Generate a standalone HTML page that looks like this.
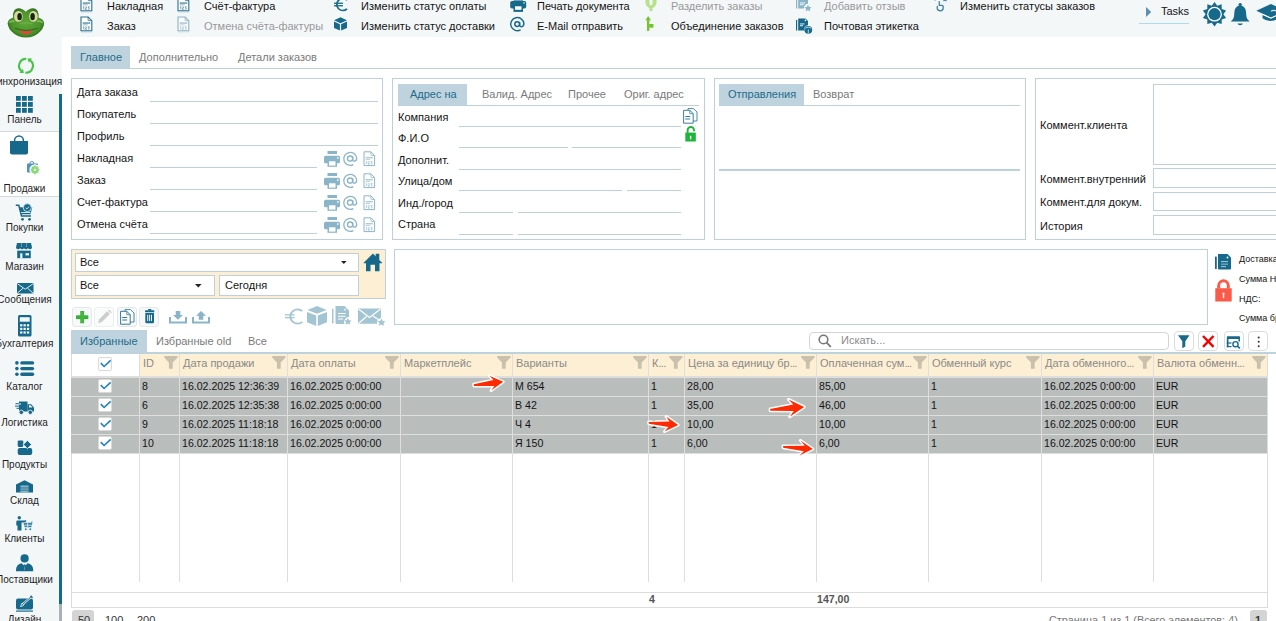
<!DOCTYPE html>
<html><head><meta charset="utf-8">
<style>
*{box-sizing:border-box;margin:0;padding:0}
html,body{width:1276px;height:621px;overflow:hidden;background:#f3f7f8;font-family:"Liberation Sans",sans-serif;font-size:11px;color:#141414}
.a{position:absolute;white-space:nowrap}
.t{position:absolute;white-space:nowrap;line-height:13px}
svg{position:absolute;display:block;overflow:visible}
#content{position:absolute;left:62px;top:37px;width:1214px;height:584px;background:#fff}
.sb{position:absolute;left:-26px;width:101px;text-align:center;font-size:10px;line-height:12px;color:#1e1e1e}
.box{position:absolute;border:1px solid #bcd1dc;background:#fff}
.ul{position:absolute;height:1px;background:#bcd1dc}
.tabsel{position:absolute;background:#bed3de;color:#226b8a}
.tabun{color:#7a7a7a}
.gt{color:#8b8b8b}
.hd{position:absolute;top:354px;height:22px;background:#fdefd3}
.cs{position:absolute;width:1px;background:#dedede}
.row{position:absolute;left:71px;width:1196px;height:18px;background:#b9bdbc}
.rs{position:absolute;left:71px;width:1196px;height:1px;background:#dedede}
.ic{fill:#1a6b8c}
</style></head><body>

<!-- TOP BAR TEXT -->
<div class="t" style="left:107px;top:0px">Накладная</div>
<div class="t" style="left:107px;top:20px">Заказ</div>
<div class="t" style="left:204px;top:0px">Счёт-фактура</div>
<div class="t gt" style="left:204px;top:20px;color:#999">Отмена счёта-фактуры</div>
<div class="t" style="left:361px;top:0px">Изменить статус оплаты</div>
<div class="t" style="left:361px;top:20px">Изменить статус доставки</div>
<div class="t" style="left:537px;top:0px">Печать документа</div>
<div class="t" style="left:537px;top:20px">E-Mail отправить</div>
<div class="t" style="left:671px;top:0px;color:#999">Разделить заказы</div>
<div class="t" style="left:671px;top:20px">Объединение заказов</div>
<div class="t" style="left:824px;top:0px;color:#999">Добавить отзыв</div>
<div class="t" style="left:824px;top:20px">Почтовая этикетка</div>
<div class="t" style="left:960px;top:0px">Изменить статусы заказов</div>
<div class="t" style="left:1161px;top:5px">Tasks</div>
<div class="a" style="left:1139px;top:23px;width:50px;height:1px;background:#a9dcf3"></div>

<!-- TOP ICONS -->
<svg style="left:79.5px;top:-4.5px;opacity:1" width="13" height="17" viewBox="0 0 13 17"><path d="M1 1 H8.1 L11.8 4.7 V14.8 H1 Z" fill="#fff" stroke="#2a7090" stroke-width="1.1"/><path d="M8.1 1 V3.8 Q8.1 4.7 9 4.7 H11.8" fill="none" stroke="#2a7090" stroke-width="0.8"/><rect x="2.7" y="6.5" width="7.6" height="1.1" fill="#2a7090"/><rect x="2.7" y="8.4" width="5" height="0.9" fill="#2a7090" opacity="0.55"/><path d="M3 11.3 L3.8 10.7 V13.3 M5.1 11.1 Q5.8 10.5 6.5 11 Q6.8 11.5 5.1 13.3 H6.8 M7.8 10.8 H9.3 L8.5 11.8 Q9.5 12 9.3 12.8 Q8.8 13.5 7.8 13.1" fill="none" stroke="#2a7090" stroke-width="0.75" opacity="0.85"/><rect x="1" y="15.5" width="11" height="0.9" fill="#2a7090" opacity="0.25"/></svg>
<svg style="left:79.5px;top:15.5px;opacity:1" width="13" height="17" viewBox="0 0 13 17"><path d="M1 1 H8.1 L11.8 4.7 V14.8 H1 Z" fill="#fff" stroke="#2a7090" stroke-width="1.1"/><path d="M8.1 1 V3.8 Q8.1 4.7 9 4.7 H11.8" fill="none" stroke="#2a7090" stroke-width="0.8"/><rect x="2.7" y="6.5" width="7.6" height="1.1" fill="#2a7090"/><rect x="2.7" y="8.4" width="5" height="0.9" fill="#2a7090" opacity="0.55"/><path d="M3 11.3 L3.8 10.7 V13.3 M5.1 11.1 Q5.8 10.5 6.5 11 Q6.8 11.5 5.1 13.3 H6.8 M7.8 10.8 H9.3 L8.5 11.8 Q9.5 12 9.3 12.8 Q8.8 13.5 7.8 13.1" fill="none" stroke="#2a7090" stroke-width="0.75" opacity="0.85"/><rect x="1" y="15.5" width="11" height="0.9" fill="#2a7090" opacity="0.25"/></svg>
<svg style="left:176.5px;top:-4.5px;opacity:1" width="13" height="17" viewBox="0 0 13 17"><path d="M1 1 H8.1 L11.8 4.7 V14.8 H1 Z" fill="#fff" stroke="#2a7090" stroke-width="1.1"/><path d="M8.1 1 V3.8 Q8.1 4.7 9 4.7 H11.8" fill="none" stroke="#2a7090" stroke-width="0.8"/><rect x="2.7" y="6.5" width="7.6" height="1.1" fill="#2a7090"/><rect x="2.7" y="8.4" width="5" height="0.9" fill="#2a7090" opacity="0.55"/><path d="M3 11.3 L3.8 10.7 V13.3 M5.1 11.1 Q5.8 10.5 6.5 11 Q6.8 11.5 5.1 13.3 H6.8 M7.8 10.8 H9.3 L8.5 11.8 Q9.5 12 9.3 12.8 Q8.8 13.5 7.8 13.1" fill="none" stroke="#2a7090" stroke-width="0.75" opacity="0.85"/><rect x="1" y="15.5" width="11" height="0.9" fill="#2a7090" opacity="0.25"/></svg>
<svg style="left:176.5px;top:15.5px;opacity:0.5" width="13" height="17" viewBox="0 0 13 17"><path d="M1 1 H8.1 L11.8 4.7 V14.8 H1 Z" fill="#fff" stroke="#2a7090" stroke-width="1.1"/><path d="M8.1 1 V3.8 Q8.1 4.7 9 4.7 H11.8" fill="none" stroke="#2a7090" stroke-width="0.8"/><rect x="2.7" y="6.5" width="7.6" height="1.1" fill="#2a7090"/><rect x="2.7" y="8.4" width="5" height="0.9" fill="#2a7090" opacity="0.55"/><path d="M3 11.3 L3.8 10.7 V13.3 M5.1 11.1 Q5.8 10.5 6.5 11 Q6.8 11.5 5.1 13.3 H6.8 M7.8 10.8 H9.3 L8.5 11.8 Q9.5 12 9.3 12.8 Q8.8 13.5 7.8 13.1" fill="none" stroke="#2a7090" stroke-width="0.75" opacity="0.85"/><rect x="1" y="15.5" width="11" height="0.9" fill="#2a7090" opacity="0.25"/></svg>
<svg style="left:333px;top:-4px" width="16" height="16" viewBox="0 0 16 16"><path d="M14 4.2 A6 6 0 1 0 14 12.8" fill="none" stroke="#17698b" stroke-width="1.7"/><rect x="1" y="6.6" width="9" height="1.3" fill="#17698b"/><rect x="1" y="9.1" width="9" height="1.3" fill="#17698b"/></svg>
<svg style="left:334px;top:16.5px" width="14" height="14" viewBox="0 0 14 14"><path d="M6.5 0.3 L12.9 3.3 L6.5 6.3 L0.1 3.3 Z" fill="#17698b"/><path d="M0 4.5 L5.9 7.2 V13.6 L0 10.9 Z" fill="#17698b"/><path d="M13 4.5 L7.1 7.2 V13.6 L13 10.9 Z" fill="#17698b"/></svg>
<svg style="left:510px;top:-1px" width="17" height="14" viewBox="0 0 17 14"><rect x="3.5" y="0" width="9.5" height="3" fill="#17698b" opacity="0.6"/><rect x="0.2" y="2" width="16" height="7.5" rx="1.8" fill="#17698b"/><rect x="3.5" y="6" width="9.5" height="6.9" fill="#17698b"/><rect x="5" y="7.3" width="6.5" height="3.5" fill="#fff"/><rect x="13.3" y="3.3" width="1.5" height="1.3" fill="#fff" opacity="0.8"/></svg>
<svg style="left:509.5px;top:16.5px" width="15" height="15" viewBox="0 0 15 15"><circle cx="7.2" cy="7.1" r="2.4" fill="none" stroke="#17698b" stroke-width="1.5"/><path d="M9.6 5 V8.2 Q9.8 9.9 11.5 9.9 Q13.9 9.5 13.9 6.6 A6.6 6.6 0 1 0 10.6 12.9" fill="none" stroke="#17698b" stroke-width="1.4"/></svg>
<svg style="left:644.5px;top:-1px" width="12" height="13" viewBox="0 0 12 13"><path fill-rule="evenodd" d="M0.4 0 V3 Q0.4 7 4.5 9.3 V12 H7.5 V9.3 Q11.6 7 11.6 3 V0 Z M4.4 0 V4 Q4.4 6.2 6 6.2 Q7.6 6.2 7.6 4 V0 Z" fill="#b7e28c"/></svg>
<svg style="left:645px;top:16px" width="10" height="16" viewBox="0 0 10 16"><rect x="2" y="2" width="2.3" height="12.9" fill="#72c427"/><path d="M0.4 4.2 L3.15 0 L5.9 4.2 Z" fill="#72c427"/><rect x="4.2" y="8" width="4.2" height="3.7" fill="#72c427"/></svg>
<svg style="left:796px;top:-3px" width="17" height="16" viewBox="0 0 17 16"><rect x="0" y="0" width="1.2" height="11.5" fill="#8ab4c8"/><path d="M2.2 0 H9.5 L12 2.5 V6.8 A4 4 0 0 0 8 11.5 H2.2 Z" fill="#8ab4c8"/><rect x="4" y="5.5" width="5" height="0.9" fill="#fff"/><rect x="4" y="7.3" width="3.5" height="0.9" fill="#fff"/><path d="M12 7.8 L13.1 10.1 L15.6 10.3 L13.7 11.9 L14.3 14.5 L12 13.1 L9.7 14.5 L10.3 11.9 L8.4 10.3 L10.9 10.1 Z" fill="#8ab4c8"/></svg>
<svg style="left:796px;top:17.5px" width="17" height="16" viewBox="0 0 17 16"><rect x="0" y="2" width="1.2" height="10.5" fill="#17698b"/><path d="M2.2 0.5 H9.5 L12 3 V7.2 A4.2 4.2 0 0 0 8.3 12.6 H2.2 Z" fill="#17698b"/><circle cx="9.4" cy="2.4" r="0.8" fill="#fff"/><rect x="4" y="5.5" width="4.5" height="0.9" fill="#fff"/><rect x="4" y="7.3" width="3" height="0.9" fill="#fff"/><circle cx="12.3" cy="11.8" r="3.9" fill="#17698b"/><path d="M9.4 10.2 L12.3 9 L15.2 10.2 M12.3 11.3 V15.4" stroke="#fff" stroke-width="0.7" fill="none"/></svg>
<svg style="left:933px;top:-3px" width="15" height="15" viewBox="0 0 15 15"><path d="M6.3 4.2 V9 M5 9.5 Q3.8 9.5 4.2 11.5 Q4.8 13.8 7.3 13.8 Q10.2 13.8 10.2 11 V9.4 Q10.2 8.3 8.8 8.3 H6.3" fill="none" stroke="#3a82a3" stroke-width="1.3"/><circle cx="2" cy="1.8" r="1.2" fill="none" stroke="#3a82a3" stroke-width="1"/><path d="M10.5 1 L13.5 4.2 M13.5 1 L10.5 4.2" stroke="#3a82a3" stroke-width="1.2"/></svg>
<svg style="left:1146px;top:7px" width="6" height="10" viewBox="0 0 6 10"><path d="M0 0 L5.2 5 L0 10 Z" fill="#5b8fab"/></svg>
<svg style="left:1202px;top:2px" width="25" height="25" viewBox="0 0 25 25"><polygon points="12.50,0.00 15.25,3.74 19.67,2.33 19.70,6.97 24.10,8.43 21.40,12.20 24.10,15.97 19.70,17.43 19.67,22.07 15.25,20.66 12.50,24.40 9.75,20.66 5.33,22.07 5.30,17.43 0.90,15.97 3.60,12.20 0.90,8.43 5.30,6.97 5.33,2.33 9.75,3.74" fill="#17698b"/><circle cx="12.5" cy="12.2" r="7.4" fill="#fff"/><circle cx="12.5" cy="12.2" r="6.1" fill="#17698b"/></svg>
<svg style="left:1230px;top:2px" width="21" height="24" viewBox="0 0 21 24"><circle cx="10.2" cy="2.6" r="1.7" fill="#17698b"/><path d="M10.2 3.5 Q4.8 4 4.4 10 L4 14.5 Q3.6 17.6 0.8 19.6 H19.6 Q16.8 17.6 16.4 14.5 L16 10 Q15.6 4 10.2 3.5 Z" fill="#17698b"/><path d="M7.5 21.4 H12.8 Q12.4 23.2 10.15 23.2 Q7.9 23.2 7.5 21.4 Z" fill="#17698b"/></svg>
<svg style="left:1256px;top:3px" width="20" height="19" viewBox="0 0 20 19"><path d="M0.3 7.7 L14.9 0.9 L30 7.7 L14.9 14.6 Z" fill="#17698b"/><path d="M6.5 12 V15.3 Q13 20.5 22 16 V12 L14.9 15.5 Z" fill="#17698b"/><path d="M6.5 11.3 L14.9 15.2 L22 12" stroke="#fff" stroke-width="0.9" fill="none"/><path d="M15 8.3 Q17 6.8 21 8" stroke="#d9e7ee" stroke-width="1.3" fill="none"/></svg>
<!-- SIDEBAR -->
<div class="a" style="left:0;top:131px;width:59px;height:66px;background:#fff;border-top:1px solid #d5d9dc;border-bottom:1px solid #d5d9dc"></div>
<div class="a" style="left:59px;top:94px;width:3px;height:510px;background:#17698b"></div>
<div class="a" style="left:59px;top:604px;width:3px;height:17px;background:#a7b2b8"></div>
<div class="sb" style="top:76px;left:-24.5px">Синхронизация</div>
<div class="sb" style="top:114px">Панель</div>
<div class="sb" style="top:183px">Продажи</div>
<div class="sb" style="top:222px">Покупки</div>
<div class="sb" style="top:261px">Магазин</div>
<div class="sb" style="top:294px">Сообщения</div>
<div class="sb" style="top:338px">Бухгалтерия</div>
<div class="sb" style="top:381px">Каталог</div>
<div class="sb" style="top:417px">Логистика</div>
<div class="sb" style="top:459px">Продукты</div>
<div class="sb" style="top:495px">Склад</div>
<div class="sb" style="top:533px">Клиенты</div>
<div class="sb" style="top:574px">Поставщики</div>
<div class="sb" style="top:614px">Дизайн</div>

<!-- SIDEBAR ICONS -->
<svg style="left:6px;top:7px" width="40" height="32" viewBox="0 0 40 32">
<defs><radialGradient id="fg" cx="0.5" cy="0.5" r="0.55"><stop offset="0" stop-color="#5fa838"/><stop offset="0.7" stop-color="#4b922b"/><stop offset="1" stop-color="#2e6a1b"/></radialGradient></defs>
<path d="M2 18.5 Q0.5 13.8 5 11.5 Q6.3 10.8 7 10.5 Q6.5 1.5 12.3 1.3 Q16.5 1.2 19.8 4.8 Q23 1.2 27.3 1.3 Q33 1.5 32.6 10.5 Q33.3 10.8 34.6 11.5 Q39.2 13.8 37.8 18.5 Q36 25 28 29 Q20 32 12 29 Q3.8 25 2 18.5 Z" fill="url(#fg)"/>
<path d="M3 15.5 Q5.5 13.5 8.5 14.5" stroke="#93c96c" stroke-width="1.8" fill="none" opacity="0.75"/>
<path d="M31 14.5 Q34.5 13.5 36.8 16" stroke="#93c96c" stroke-width="1.8" fill="none" opacity="0.75"/>
<ellipse cx="12.4" cy="9.4" rx="4.3" ry="5.4" fill="#ddd7a4"/>
<ellipse cx="27.4" cy="9.4" rx="4.3" ry="5.4" fill="#ddd7a4"/>
<ellipse cx="13.6" cy="9.7" rx="2.3" ry="3.6" fill="#132a0f"/>
<ellipse cx="26.6" cy="9.7" rx="2.3" ry="3.6" fill="#132a0f"/>
<path d="M13 17 Q19.8 14.5 26.5 17" stroke="#74b24d" stroke-width="1.6" fill="none" opacity="0.7"/>
<path d="M9 21.3 Q20 25.5 31.5 21.3" stroke="#2c6219" stroke-width="1" fill="none"/>
<path d="M13.5 23.3 Q20 25.3 26.7 23.3 Q25 27.2 20 27.2 Q15 27.2 13.5 23.3 Z" fill="#e2463a"/>
</svg>
<svg style="left:17px;top:57px" width="18" height="18" viewBox="0 0 18 18"><path d="M9.24 1.9 A6.9 6.9 0 0 0 4.57 14.09" fill="none" stroke="#46c446" stroke-width="2.1"/><path d="M6.9 16.1 L2.4 15.9 L5.9 11.7 Z" fill="#46c446"/><path d="M12.96 3.15 A6.9 6.9 0 0 1 8.4 15.67" fill="none" stroke="#46c446" stroke-width="2.1"/><path d="M10.5 1.4 L15 1.2 L11.8 5.7 Z" fill="#46c446"/></svg>
<svg style="left:16px;top:96px" width="17" height="17" viewBox="0 0 17 17"><rect x="0" y="0" width="4.8" height="4.8" fill="#17698b"/><rect x="0" y="6" width="4.8" height="4.8" fill="#17698b"/><rect x="0" y="12" width="4.8" height="4.8" fill="#17698b"/><rect x="6" y="0" width="4.8" height="4.8" fill="#17698b"/><rect x="6" y="6" width="4.8" height="4.8" fill="#17698b"/><rect x="6" y="12" width="4.8" height="4.8" fill="#17698b"/><rect x="12" y="0" width="4.8" height="4.8" fill="#17698b"/><rect x="12" y="6" width="4.8" height="4.8" fill="#17698b"/><rect x="12" y="12" width="4.8" height="4.8" fill="#17698b"/></svg>
<svg style="left:10px;top:135px" width="18" height="20" viewBox="0 0 18 20"><path d="M4.6 6.5 V5.5 A4.4 4.4 0 0 1 13.4 5.5 V6.5" fill="none" stroke="#17698b" stroke-width="1.5"/><path d="M0 6 H18 V17.5 Q18 19.5 16 19.5 H2 Q0 19.5 0 17.5 Z" fill="#17698b"/></svg>
<svg style="left:27px;top:161px" width="14" height="15" viewBox="0 0 14 15"><path d="M2.8 3 V2.5 A2 2 0 0 1 6.8 2.5 V3" fill="none" stroke="#4f94ba" stroke-width="1"/><rect x="0" y="2.6" width="11" height="9" rx="0.8" fill="#4f94ba"/><circle cx="8" cy="8.8" r="5.6" fill="#fff"/><polygon points="12.70,8.80 11.42,10.22 11.32,12.12 9.42,12.22 8.00,13.50 6.58,12.22 4.68,12.12 4.58,10.22 3.30,8.80 4.58,7.38 4.68,5.48 6.58,5.38 8.00,4.10 9.42,5.38 11.32,5.48 11.42,7.38" fill="#8edb7f"/><circle cx="8" cy="8.8" r="1.1" fill="#fff"/></svg>
<svg style="left:15px;top:203px" width="18" height="18" viewBox="0 0 18 18"><path d="M0.8 2.3 H3.8 L6.5 13 H16" fill="none" stroke="#17698b" stroke-width="1.5"/><path d="M4.2 4.3 H17.3 L15.5 11.3 H6 Z" fill="#17698b"/><rect x="6" y="9.2" width="9.5" height="0.8" fill="#fff"/><circle cx="12.3" cy="4.6" r="4" fill="#17698b" stroke="#f3f7f8" stroke-width="0.8"/><path d="M10.6 4.8 L11.9 6 L14 3.6" stroke="#fff" stroke-width="0.8" fill="none"/><circle cx="7.5" cy="16.3" r="1.4" fill="#17698b"/><circle cx="14.5" cy="16.3" r="1.4" fill="#17698b"/></svg>
<svg style="left:16px;top:243px" width="16" height="16" viewBox="0 0 16 16"><path d="M1 0 H15 L16 4.5 Q16 6.3 14 6.3 Q12.3 6.3 12 5 Q11.5 6.3 9.8 6.3 Q8.3 6.3 8 5 Q7.7 6.3 6.2 6.3 Q4.5 6.3 4 5 Q3.7 6.3 2 6.3 Q0 6.3 0 4.5 Z" fill="#17698b"/><rect x="5.3" y="0" width="0.6" height="4" fill="#fff" opacity="0.6"/><rect x="10.1" y="0" width="0.6" height="4" fill="#fff" opacity="0.6"/><path d="M1.2 7.6 H14.8 V15.2 H1.2 Z" fill="#17698b"/><rect x="4.2" y="10.3" width="2.2" height="5" fill="#f3f7f8"/><rect x="9.5" y="10.2" width="3.5" height="2.2" fill="#f3f7f8"/></svg>
<svg style="left:16.5px;top:282.5px" width="17" height="11" viewBox="0 0 17 11"><rect x="0" y="0" width="16.5" height="10.5" rx="1" fill="#17698b"/><path d="M0.5 0.8 L8.25 6.2 L16 0.8 M0.5 10 L6 5.2 M16 10 L10.5 5.2" stroke="#f3f7f8" stroke-width="0.9" fill="none"/></svg>
<svg style="left:18px;top:315px" width="14" height="22" viewBox="0 0 14 22"><rect x="0" y="0" width="13.5" height="21.5" rx="1.6" fill="#17698b"/><rect x="1.8" y="2.2" width="9.9" height="4.5" fill="#f3f7f8"/><rect x="2.1" y="9.2" width="2.3" height="2.2" fill="#f3f7f8"/><rect x="5.5" y="9.2" width="2.3" height="2.2" fill="#f3f7f8"/><rect x="8.9" y="9.2" width="2.3" height="2.2" fill="#f3f7f8"/><rect x="2.1" y="12.8" width="2.3" height="2.2" fill="#f3f7f8"/><rect x="5.5" y="12.8" width="2.3" height="2.2" fill="#f3f7f8"/><rect x="8.9" y="12.8" width="2.3" height="2.2" fill="#f3f7f8"/><rect x="2.1" y="16.4" width="2.3" height="2.2" fill="#f3f7f8"/><rect x="5.5" y="16.4" width="2.3" height="2.2" fill="#f3f7f8"/><rect x="8.9" y="16.4" width="2.3" height="2.2" fill="#f3f7f8"/></svg>
<svg style="left:15px;top:361px" width="20" height="16" viewBox="0 0 20 16"><circle cx="1.9" cy="1.9" r="1.8" fill="#17698b"/><rect x="5.2" y="0.2" width="14" height="3.4" rx="1.7" fill="#17698b"/><circle cx="1.9" cy="7.6" r="1.8" fill="#17698b"/><rect x="5.2" y="5.9" width="14" height="3.4" rx="1.7" fill="#17698b"/><circle cx="1.9" cy="13.3" r="1.8" fill="#17698b"/><rect x="5.2" y="11.6" width="14" height="3.4" rx="1.7" fill="#17698b"/></svg>
<svg style="left:15px;top:401px" width="20" height="14" viewBox="0 0 20 14"><path d="M4 0.5 H12.5 V10.5 H4 Z" fill="#17698b"/><path d="M12.5 3.2 H16.2 L19 6.5 V10.5 H12.5 Z" fill="#17698b"/><path d="M14 4.3 H15.7 L17.5 6.5 H14 Z" fill="#f3f7f8"/><rect x="0" y="2.5" width="6" height="1" fill="#f3f7f8"/><rect x="0.5" y="2.2" width="3.5" height="1" fill="#17698b"/><rect x="0" y="4.6" width="4" height="1" fill="#17698b"/><rect x="1.5" y="6.8" width="2.5" height="1" fill="#17698b"/><circle cx="6.3" cy="11.3" r="2.2" fill="#17698b" stroke="#f3f7f8" stroke-width="0.8"/><circle cx="15.3" cy="11.3" r="2.2" fill="#17698b" stroke="#f3f7f8" stroke-width="0.8"/></svg>
<svg style="left:16.5px;top:440px" width="16" height="15" viewBox="0 0 16 15"><rect x="0.7" y="0.4" width="5.6" height="6.5" rx="1.1" fill="#17698b"/><rect x="0.7" y="8.1" width="14.5" height="6.8" rx="2" fill="#17698b"/><path d="M10.4 0.3 L14.6 4.5 L10.4 8.7 L6.2 4.5 Z" fill="#17698b" stroke="#f3f7f8" stroke-width="0.9" stroke-linejoin="round"/></svg>
<svg style="left:15.5px;top:480px" width="17" height="13" viewBox="0 0 17 13"><path d="M0 4.5 L8.5 0.2 L17 4.5 V12.5 H0 Z" fill="#17698b"/><rect x="4.5" y="5.5" width="8" height="7" fill="#8fb8cc"/><rect x="4.5" y="7.5" width="8" height="0.9" fill="#17698b"/><rect x="4.5" y="9.7" width="8" height="0.9" fill="#17698b"/></svg>
<svg style="left:15.5px;top:516px" width="17" height="15" viewBox="0 0 17 15"><circle cx="3.3" cy="1.7" r="1.7" fill="#17698b"/><path d="M1 4.5 H7.5 Q9 4.5 9.5 4 L10.5 5 Q9.2 6.5 7 6.5 H5.5 V14.5 H1.5 V9.5 H0.3 V6 Q0.3 4.5 1 4.5 Z" fill="#17698b"/><path d="M7.5 6.8 H16.5 L15.3 11.3 H8.7 Z" fill="#3a85a8"/><rect x="8.5" y="8.8" width="7.5" height="0.7" fill="#f3f7f8"/><rect x="11.4" y="6.8" width="0.7" height="4.5" fill="#f3f7f8"/><circle cx="9.8" cy="13.3" r="1" fill="#3a85a8"/><circle cx="14.3" cy="13.3" r="1" fill="#3a85a8"/><path d="M15.2 6.8 L16.3 5.2" stroke="#3a85a8" stroke-width="0.8"/></svg>
<svg style="left:15.5px;top:553.5px" width="18" height="18" viewBox="0 0 18 18"><circle cx="8.6" cy="4.4" r="4.1" fill="#17698b"/><path d="M0 16 Q0 10.3 5.8 9.3 L7.3 11.3 L8.6 10.2 L9.9 11.3 L11.4 9.3 Q17.2 10.3 17.2 16 V17.2 H0 Z" fill="#17698b"/><path d="M8.6 10.6 L8.2 15.5 L8.6 16.2 L9 15.5 Z" fill="#f3f7f8" opacity="0.5"/></svg>
<svg style="left:16px;top:594.5px" width="18" height="18" viewBox="0 0 18 18"><rect x="0" y="3.5" width="17" height="11" rx="2" fill="#17698b"/><rect x="0" y="15.5" width="17" height="1.2" fill="#17698b"/><path d="M6.5 9.5 L15.8 1.2" stroke="#f3f7f8" stroke-width="2.2"/><path d="M6.5 9.5 L15.8 1.2" stroke="#17698b" stroke-width="1"/><path d="M15 0.3 L17 2.3 L16 3.3 L14 1.3 Z" fill="#17698b"/><path d="M7 8 Q5 8 5 10.5 L4.5 11.5 Q7.5 11.5 8 9.2" fill="none" stroke="#f3f7f8" stroke-width="0.8"/></svg>
<!-- CONTENT -->
<div id="content"></div>


<!-- TABS -->
<div class="tabsel a" style="left:71px;top:46px;width:59px;height:22px"></div>
<div class="t" style="left:80px;top:51px;color:#226b8a">Главное</div>
<div class="t tabun" style="left:139px;top:51px">Дополнительно</div>
<div class="t tabun" style="left:238px;top:51px">Детали заказов</div>
<div class="ul" style="left:71px;top:68px;width:1205px"></div>

<!-- BOX1 -->
<div class="box" style="left:71px;top:78px;width:312px;height:162px"></div>
<div class="t" style="left:77px;top:86px">Дата заказа</div>
<div class="t" style="left:77px;top:108px">Покупатель</div>
<div class="t" style="left:77px;top:130px">Профиль</div>
<div class="t" style="left:77px;top:152px">Накладная</div>
<div class="t" style="left:77px;top:174px">Заказ</div>
<div class="t" style="left:77px;top:196px">Счет-фактура</div>
<div class="t" style="left:77px;top:218px">Отмена счёта</div>
<div class="ul" style="left:150px;top:101px;width:228px"></div>
<div class="ul" style="left:150px;top:123px;width:228px"></div>
<div class="ul" style="left:150px;top:145px;width:228px"></div>
<div class="ul" style="left:150px;top:167px;width:167px"></div>
<div class="ul" style="left:150px;top:189px;width:167px"></div>
<div class="ul" style="left:150px;top:211px;width:167px"></div>
<div class="ul" style="left:150px;top:233px;width:167px"></div>

<!-- BOX2 -->
<div class="box" style="left:392px;top:78px;width:313px;height:162px"></div>
<div class="tabsel a" style="left:398px;top:84px;width:69px;height:21px"></div>
<div class="t" style="left:410px;top:88px;color:#226b8a">Адрес на</div>
<div class="t tabun" style="left:482px;top:88px">Валид. Адрес</div>
<div class="t tabun" style="left:568px;top:88px">Прочее</div>
<div class="t tabun" style="left:624px;top:88px">Ориг. адрес</div>
<div class="ul" style="left:398px;top:105px;width:301px"></div>
<div class="t" style="left:398px;top:111px">Компания</div>
<div class="t" style="left:398px;top:132px">Ф.И.О</div>
<div class="t" style="left:398px;top:154px">Дополнит.</div>
<div class="t" style="left:398px;top:175px">Улица/дом</div>
<div class="t" style="left:398px;top:197px">Инд./город</div>
<div class="t" style="left:398px;top:218px">Страна</div>
<div class="ul" style="left:459px;top:126px;width:222px"></div>
<div class="ul" style="left:459px;top:147px;width:109px"></div>
<div class="ul" style="left:572px;top:147px;width:109px"></div>
<div class="ul" style="left:459px;top:169px;width:222px"></div>
<div class="ul" style="left:459px;top:190px;width:163px"></div>
<div class="ul" style="left:627px;top:190px;width:54px"></div>
<div class="ul" style="left:459px;top:212px;width:54px"></div>
<div class="ul" style="left:518px;top:212px;width:163px"></div>
<div class="ul" style="left:459px;top:234px;width:54px"></div>
<div class="ul" style="left:518px;top:234px;width:163px"></div>

<!-- BOX3 -->
<div class="box" style="left:714px;top:78px;width:312px;height:162px"></div>
<div class="tabsel a" style="left:719px;top:84px;width:85px;height:21px"></div>
<div class="t" style="left:728px;top:88px;color:#226b8a">Отправления</div>
<div class="t tabun" style="left:813px;top:88px">Возврат</div>
<div class="ul" style="left:719px;top:105px;width:301px"></div>
<div class="ul" style="left:719px;top:169px;width:301px;height:2px"></div>

<!-- BOX4 -->
<div class="box" style="left:1035px;top:78px;width:260px;height:162px"></div>
<div class="t" style="left:1040px;top:119px">Коммент.клиента</div>
<div class="t" style="left:1040px;top:173px">Коммент.внутренний</div>
<div class="t" style="left:1040px;top:196px">Коммент.для докум.</div>
<div class="t" style="left:1040px;top:220px">История</div>
<div class="box" style="left:1153px;top:84px;width:140px;height:81px"></div>
<div class="box" style="left:1153px;top:168px;width:140px;height:20px"></div>
<div class="box" style="left:1153px;top:192px;width:140px;height:19px"></div>
<div class="box" style="left:1153px;top:215px;width:140px;height:20px"></div>

<!-- FILTER BOX -->
<div class="box" style="left:71px;top:249px;width:315px;height:50px;background:#fdefd3"></div>
<div class="box" style="left:75px;top:253px;width:284px;height:19px"></div>
<div class="t" style="left:80px;top:256px">Все</div>
<div class="box" style="left:75px;top:275px;width:140px;height:21px"></div>
<div class="t" style="left:80px;top:279px">Все</div>
<div class="box" style="left:219px;top:275px;width:140px;height:21px"></div>
<div class="t" style="left:225px;top:279px">Сегодня</div>

<!-- BIG TEXTAREA -->
<div class="box" style="left:394px;top:249px;width:814px;height:76px"></div>

<!-- RIGHT PANEL -->
<div class="a" style="left:1239px;top:254px;font-size:9px;line-height:11px">Доставка</div>
<div class="a" style="left:1239px;top:274px;font-size:9px;line-height:11px">Сумма Н</div>
<div class="a" style="left:1239px;top:294px;font-size:9px;line-height:11px">НДС:</div>
<div class="a" style="left:1239px;top:313px;font-size:9px;line-height:11px">Сумма бр</div>

<!-- TOOLBAR BUTTONS -->
<div class="a" style="left:72px;top:307px;width:20px;height:20px;border:1px solid #e3e8eb;border-radius:3px;background:#f6f8f9"></div>
<div class="a" style="left:94px;top:307px;width:20px;height:20px;border:1px solid #eceff1;border-radius:3px;background:#fafbfb"></div>
<div class="a" style="left:117px;top:307px;width:20px;height:20px;border:1px solid #e3e8eb;border-radius:3px;background:#f6f8f9"></div>
<div class="a" style="left:139px;top:307px;width:20px;height:20px;border:1px solid #e3e8eb;border-radius:3px;background:#f6f8f9"></div>

<!-- GRID TABS -->
<div class="tabsel a" style="left:71px;top:330px;width:76px;height:22px"></div>
<div class="t" style="left:80px;top:335px;color:#226b8a">Избранные</div>
<div class="t tabun" style="left:156px;top:335px">Избранные old</div>
<div class="t tabun" style="left:248px;top:335px">Все</div>

<!-- SEARCH -->
<div class="a" style="left:809px;top:332px;width:360px;height:18px;border:1px solid #d4d4d4;border-radius:4px;background:#fff"></div>
<div class="t" style="left:841px;top:334px;color:#8a8a8a">Искать...</div>
<div class="a" style="left:1174px;top:331px;width:20px;height:20px;border:1px solid #dcdcdc;border-radius:4px;background:#fff"></div>
<div class="a" style="left:1198px;top:331px;width:20px;height:20px;border:1px solid #dcdcdc;border-radius:4px;background:#fff"></div>
<div class="a" style="left:1224px;top:331px;width:20px;height:20px;border:1px solid #dcdcdc;border-radius:4px;background:#fff"></div>
<div class="a" style="left:1248px;top:331px;width:20px;height:20px;border:1px solid #dcdcdc;border-radius:4px;background:#fff"></div>

<!-- TABLE -->
<div class="a" style="left:71px;top:352px;width:1205px;height:2px;background:#bcd3de"></div>
<div class="a" style="left:71px;top:354px;width:1px;height:254px;background:#dcdcdc"></div>
<div class="a" style="left:1267px;top:354px;width:1px;height:254px;background:#dcdcdc"></div>
<div class="hd" style="left:140px;width:1127px"></div>
<div class="a" style="left:71px;top:376px;width:1197px;height:2px;background:#dedede"></div>
<div class="row" style="top:378px"></div>
<div class="rs" style="top:396px"></div>
<div class="row" style="top:397px"></div>
<div class="rs" style="top:415px"></div>
<div class="row" style="top:416px"></div>
<div class="rs" style="top:434px"></div>
<div class="row" style="top:435px"></div>
<div class="rs" style="top:453px"></div>
<div class="cs" style="left:139px;top:354px;height:228px"></div>
<div class="cs" style="left:179px;top:354px;height:228px"></div>
<div class="cs" style="left:287px;top:354px;height:228px"></div>
<div class="cs" style="left:400px;top:354px;height:228px"></div>
<div class="cs" style="left:512px;top:354px;height:228px"></div>
<div class="cs" style="left:648px;top:354px;height:228px"></div>
<div class="cs" style="left:684px;top:354px;height:228px"></div>
<div class="cs" style="left:816px;top:354px;height:228px"></div>
<div class="cs" style="left:928px;top:354px;height:228px"></div>
<div class="cs" style="left:1041px;top:354px;height:228px"></div>
<div class="cs" style="left:1153px;top:354px;height:228px"></div>
<div class="t" style="left:143px;top:357px;color:#8a8a8a">ID</div>
<svg style="left:164.0px;top:355px" width="14" height="15" viewBox="0 0 14 15"><path d="M0.2 1 H13.5 V2.5 L8.7 7.6 V13.8 H4.9 V7.6 L0.2 2.5 Z" fill="#c9c0ae"/></svg>
<div class="t" style="left:183px;top:357px;color:#8a8a8a">Дата продажи</div>
<svg style="left:272.0px;top:355px" width="14" height="15" viewBox="0 0 14 15"><path d="M0.2 1 H13.5 V2.5 L8.7 7.6 V13.8 H4.9 V7.6 L0.2 2.5 Z" fill="#c9c0ae"/></svg>
<div class="t" style="left:291px;top:357px;color:#8a8a8a">Дата оплаты</div>
<svg style="left:385.0px;top:355px" width="14" height="15" viewBox="0 0 14 15"><path d="M0.2 1 H13.5 V2.5 L8.7 7.6 V13.8 H4.9 V7.6 L0.2 2.5 Z" fill="#c9c0ae"/></svg>
<div class="t" style="left:404px;top:357px;color:#8a8a8a">Маркетплейс</div>
<svg style="left:497.0px;top:355px" width="14" height="15" viewBox="0 0 14 15"><path d="M0.2 1 H13.5 V2.5 L8.7 7.6 V13.8 H4.9 V7.6 L0.2 2.5 Z" fill="#c9c0ae"/></svg>
<div class="t" style="left:516px;top:357px;color:#8a8a8a">Варианты</div>
<svg style="left:633.0px;top:355px" width="14" height="15" viewBox="0 0 14 15"><path d="M0.2 1 H13.5 V2.5 L8.7 7.6 V13.8 H4.9 V7.6 L0.2 2.5 Z" fill="#c9c0ae"/></svg>
<div class="t" style="left:652px;top:357px;color:#8a8a8a">К<span style="letter-spacing:-0.7px">...</span></div>
<svg style="left:669.0px;top:355px" width="14" height="15" viewBox="0 0 14 15"><path d="M0.2 1 H13.5 V2.5 L8.7 7.6 V13.8 H4.9 V7.6 L0.2 2.5 Z" fill="#c9c0ae"/></svg>
<div class="t" style="left:688px;top:357px;color:#8a8a8a">Цена за единицу бр<span style="letter-spacing:-0.7px">...</span></div>
<svg style="left:801.0px;top:355px" width="14" height="15" viewBox="0 0 14 15"><path d="M0.2 1 H13.5 V2.5 L8.7 7.6 V13.8 H4.9 V7.6 L0.2 2.5 Z" fill="#c9c0ae"/></svg>
<div class="t" style="left:820px;top:357px;color:#8a8a8a">Оплаченная сум<span style="letter-spacing:-0.7px">...</span></div>
<svg style="left:913.0px;top:355px" width="14" height="15" viewBox="0 0 14 15"><path d="M0.2 1 H13.5 V2.5 L8.7 7.6 V13.8 H4.9 V7.6 L0.2 2.5 Z" fill="#c9c0ae"/></svg>
<div class="t" style="left:932px;top:357px;color:#8a8a8a">Обменный курс</div>
<svg style="left:1026.0px;top:355px" width="14" height="15" viewBox="0 0 14 15"><path d="M0.2 1 H13.5 V2.5 L8.7 7.6 V13.8 H4.9 V7.6 L0.2 2.5 Z" fill="#c9c0ae"/></svg>
<div class="t" style="left:1045px;top:357px;color:#8a8a8a">Дата обменного<span style="letter-spacing:-0.7px">...</span></div>
<svg style="left:1138.0px;top:355px" width="14" height="15" viewBox="0 0 14 15"><path d="M0.2 1 H13.5 V2.5 L8.7 7.6 V13.8 H4.9 V7.6 L0.2 2.5 Z" fill="#c9c0ae"/></svg>
<div class="t" style="left:1157px;top:357px;color:#8a8a8a">Валюта обменн<span style="letter-spacing:-0.7px">...</span></div>
<svg style="left:1252.0px;top:355px" width="14" height="15" viewBox="0 0 14 15"><path d="M0.2 1 H13.5 V2.5 L8.7 7.6 V13.8 H4.9 V7.6 L0.2 2.5 Z" fill="#c9c0ae"/></svg>
<div class="t" style="left:142px;top:380px;font-size:10.6px">8</div>
<div class="t" style="left:182px;top:380px;font-size:10.6px">16.02.2025 12:36:39</div>
<div class="t" style="left:290px;top:380px;font-size:10.6px">16.02.2025 0:00:00</div>
<div class="t" style="left:515px;top:380px;font-size:10.6px">M 654</div>
<div class="t" style="left:651px;top:380px;font-size:10.6px">1</div>
<div class="t" style="left:687px;top:380px;font-size:10.6px">28,00</div>
<div class="t" style="left:819px;top:380px;font-size:10.6px">85,00</div>
<div class="t" style="left:931px;top:380px;font-size:10.6px">1</div>
<div class="t" style="left:1044px;top:380px;font-size:10.6px">16.02.2025 0:00:00</div>
<div class="t" style="left:1156px;top:380px;font-size:10.6px">EUR</div>
<div class="t" style="left:142px;top:399px;font-size:10.6px">6</div>
<div class="t" style="left:182px;top:399px;font-size:10.6px">16.02.2025 12:35:38</div>
<div class="t" style="left:290px;top:399px;font-size:10.6px">16.02.2025 0:00:00</div>
<div class="t" style="left:515px;top:399px;font-size:10.6px">B 42</div>
<div class="t" style="left:651px;top:399px;font-size:10.6px">1</div>
<div class="t" style="left:687px;top:399px;font-size:10.6px">35,00</div>
<div class="t" style="left:819px;top:399px;font-size:10.6px">46,00</div>
<div class="t" style="left:931px;top:399px;font-size:10.6px">1</div>
<div class="t" style="left:1044px;top:399px;font-size:10.6px">16.02.2025 0:00:00</div>
<div class="t" style="left:1156px;top:399px;font-size:10.6px">EUR</div>
<div class="t" style="left:142px;top:418px;font-size:10.6px">9</div>
<div class="t" style="left:182px;top:418px;font-size:10.6px">16.02.2025 11:18:18</div>
<div class="t" style="left:290px;top:418px;font-size:10.6px">16.02.2025 0:00:00</div>
<div class="t" style="left:515px;top:418px;font-size:10.6px">Ч 4</div>
<div class="t" style="left:651px;top:418px;font-size:10.6px">1</div>
<div class="t" style="left:687px;top:418px;font-size:10.6px">10,00</div>
<div class="t" style="left:819px;top:418px;font-size:10.6px">10,00</div>
<div class="t" style="left:931px;top:418px;font-size:10.6px">1</div>
<div class="t" style="left:1044px;top:418px;font-size:10.6px">16.02.2025 0:00:00</div>
<div class="t" style="left:1156px;top:418px;font-size:10.6px">EUR</div>
<div class="t" style="left:142px;top:437px;font-size:10.6px">10</div>
<div class="t" style="left:182px;top:437px;font-size:10.6px">16.02.2025 11:18:18</div>
<div class="t" style="left:290px;top:437px;font-size:10.6px">16.02.2025 0:00:00</div>
<div class="t" style="left:515px;top:437px;font-size:10.6px">Я 150</div>
<div class="t" style="left:651px;top:437px;font-size:10.6px">1</div>
<div class="t" style="left:687px;top:437px;font-size:10.6px">6,00</div>
<div class="t" style="left:819px;top:437px;font-size:10.6px">6,00</div>
<div class="t" style="left:931px;top:437px;font-size:10.6px">1</div>
<div class="t" style="left:1044px;top:437px;font-size:10.6px">16.02.2025 0:00:00</div>
<div class="t" style="left:1156px;top:437px;font-size:10.6px">EUR</div>
<div class="a" style="left:98px;top:357px;width:14px;height:14px;background:#fff;border:1px solid #d9d9d9;border-radius:2px"></div><svg style="left:98px;top:357px" width="14" height="14" viewBox="0 0 14 14"><path d="M2.8 6.1 L6.1 9.5 L12.6 3.4" fill="none" stroke="#1a80c2" stroke-width="1.6"/></svg>
<div class="a" style="left:98px;top:379px;width:14px;height:14px;background:#fff;border:1px solid #d9d9d9;border-radius:2px"></div><svg style="left:98px;top:379px" width="14" height="14" viewBox="0 0 14 14"><path d="M2.8 6.1 L6.1 9.5 L12.6 3.4" fill="none" stroke="#1a80c2" stroke-width="1.6"/></svg>
<div class="a" style="left:98px;top:398px;width:14px;height:14px;background:#fff;border:1px solid #d9d9d9;border-radius:2px"></div><svg style="left:98px;top:398px" width="14" height="14" viewBox="0 0 14 14"><path d="M2.8 6.1 L6.1 9.5 L12.6 3.4" fill="none" stroke="#1a80c2" stroke-width="1.6"/></svg>
<div class="a" style="left:98px;top:417px;width:14px;height:14px;background:#fff;border:1px solid #d9d9d9;border-radius:2px"></div><svg style="left:98px;top:417px" width="14" height="14" viewBox="0 0 14 14"><path d="M2.8 6.1 L6.1 9.5 L12.6 3.4" fill="none" stroke="#1a80c2" stroke-width="1.6"/></svg>
<div class="a" style="left:98px;top:436px;width:14px;height:14px;background:#fff;border:1px solid #d9d9d9;border-radius:2px"></div><svg style="left:98px;top:436px" width="14" height="14" viewBox="0 0 14 14"><path d="M2.8 6.1 L6.1 9.5 L12.6 3.4" fill="none" stroke="#1a80c2" stroke-width="1.6"/></svg>
<div class="a" style="left:71px;top:592px;width:1197px;height:1px;background:#dcdcdc"></div>
<div class="a" style="left:71px;top:607px;width:1197px;height:1px;background:#dcdcdc"></div>
<div class="t" style="left:649px;top:593px;font-weight:bold;color:#555;font-size:10.6px">4</div>
<div class="t" style="left:817px;top:593px;font-weight:bold;color:#555;font-size:10.6px">147,00</div>
<div class="a" style="left:72px;top:610px;width:22px;height:20px;background:#d4d4d4;border-radius:3px"></div>
<div class="t" style="left:78px;top:614px;color:#333">50</div>
<div class="t" style="left:105px;top:614px;color:#333">100</div>
<div class="t" style="left:137px;top:614px;color:#333">200</div>
<div class="t" style="left:1049px;top:614px;color:#777;font-size:10.85px">Страница 1 из 1 (Всего элементов: 4)</div>
<div class="a" style="left:1250px;top:610px;width:17px;height:20px;background:#d4d4d4;border-radius:3px"></div>
<div class="t" style="left:1255px;top:614px;color:#333;font-weight:bold">1</div>
<!-- CONTENT ICONS -->
<svg style="left:324px;top:151px" width="17" height="16" viewBox="0 0 17 16"><rect x="3.5" y="0" width="9.5" height="3" fill="#8ab5c8"/><rect x="0" y="4.8" width="16" height="7.5" rx="1.5" fill="#8ab5c8"/><rect x="3.5" y="9.3" width="9.5" height="6.5" fill="#8ab5c8"/><rect x="5" y="10.3" width="6.5" height="4.3" fill="#fff"/><rect x="13" y="6.3" width="1.6" height="1.4" fill="#fff"/></svg><svg style="left:343px;top:151px" width="15" height="16" viewBox="0 0 15 16"><circle cx="7.1" cy="7.6" r="2.6" fill="none" stroke="#8ab5c8" stroke-width="1.4"/><path d="M9.7 5.2 V8.6 Q9.9 10.3 11.6 10.2 Q13.7 9.8 13.7 7.2 A6.5 6.5 0 1 0 10.3 13.6" fill="none" stroke="#8ab5c8" stroke-width="1.3"/></svg><svg style="left:362.5px;top:151px" width="13" height="17" viewBox="0 0 13 17"><path d="M1 0.8 H7.9 L11.6 4.5 V14.6 H1 Z" fill="#fff" stroke="#8ab5c8" stroke-width="1"/><path d="M7.9 0.8 V3.6 Q7.9 4.5 8.8 4.5 H11.6" fill="none" stroke="#8ab5c8" stroke-width="0.8"/><rect x="2.6" y="6.3" width="7.2" height="1" fill="#8ab5c8"/><rect x="2.6" y="8.2" width="4.6" height="0.8" fill="#8ab5c8" opacity="0.7"/><path d="M2.9 11.1 L3.7 10.5 V13.1 M5 10.9 Q5.7 10.3 6.4 10.8 Q6.7 11.3 5 13.1 H6.7 M7.7 10.6 H9.2 L8.4 11.6 Q9.4 11.8 9.2 12.6 Q8.7 13.3 7.7 12.9" fill="none" stroke="#8ab5c8" stroke-width="0.7"/></svg>
<svg style="left:324px;top:173px" width="17" height="16" viewBox="0 0 17 16"><rect x="3.5" y="0" width="9.5" height="3" fill="#8ab5c8"/><rect x="0" y="4.8" width="16" height="7.5" rx="1.5" fill="#8ab5c8"/><rect x="3.5" y="9.3" width="9.5" height="6.5" fill="#8ab5c8"/><rect x="5" y="10.3" width="6.5" height="4.3" fill="#fff"/><rect x="13" y="6.3" width="1.6" height="1.4" fill="#fff"/></svg><svg style="left:343px;top:173px" width="15" height="16" viewBox="0 0 15 16"><circle cx="7.1" cy="7.6" r="2.6" fill="none" stroke="#8ab5c8" stroke-width="1.4"/><path d="M9.7 5.2 V8.6 Q9.9 10.3 11.6 10.2 Q13.7 9.8 13.7 7.2 A6.5 6.5 0 1 0 10.3 13.6" fill="none" stroke="#8ab5c8" stroke-width="1.3"/></svg><svg style="left:362.5px;top:173px" width="13" height="17" viewBox="0 0 13 17"><path d="M1 0.8 H7.9 L11.6 4.5 V14.6 H1 Z" fill="#fff" stroke="#8ab5c8" stroke-width="1"/><path d="M7.9 0.8 V3.6 Q7.9 4.5 8.8 4.5 H11.6" fill="none" stroke="#8ab5c8" stroke-width="0.8"/><rect x="2.6" y="6.3" width="7.2" height="1" fill="#8ab5c8"/><rect x="2.6" y="8.2" width="4.6" height="0.8" fill="#8ab5c8" opacity="0.7"/><path d="M2.9 11.1 L3.7 10.5 V13.1 M5 10.9 Q5.7 10.3 6.4 10.8 Q6.7 11.3 5 13.1 H6.7 M7.7 10.6 H9.2 L8.4 11.6 Q9.4 11.8 9.2 12.6 Q8.7 13.3 7.7 12.9" fill="none" stroke="#8ab5c8" stroke-width="0.7"/></svg>
<svg style="left:324px;top:195px" width="17" height="16" viewBox="0 0 17 16"><rect x="3.5" y="0" width="9.5" height="3" fill="#8ab5c8"/><rect x="0" y="4.8" width="16" height="7.5" rx="1.5" fill="#8ab5c8"/><rect x="3.5" y="9.3" width="9.5" height="6.5" fill="#8ab5c8"/><rect x="5" y="10.3" width="6.5" height="4.3" fill="#fff"/><rect x="13" y="6.3" width="1.6" height="1.4" fill="#fff"/></svg><svg style="left:343px;top:195px" width="15" height="16" viewBox="0 0 15 16"><circle cx="7.1" cy="7.6" r="2.6" fill="none" stroke="#8ab5c8" stroke-width="1.4"/><path d="M9.7 5.2 V8.6 Q9.9 10.3 11.6 10.2 Q13.7 9.8 13.7 7.2 A6.5 6.5 0 1 0 10.3 13.6" fill="none" stroke="#8ab5c8" stroke-width="1.3"/></svg><svg style="left:362.5px;top:195px" width="13" height="17" viewBox="0 0 13 17"><path d="M1 0.8 H7.9 L11.6 4.5 V14.6 H1 Z" fill="#fff" stroke="#8ab5c8" stroke-width="1"/><path d="M7.9 0.8 V3.6 Q7.9 4.5 8.8 4.5 H11.6" fill="none" stroke="#8ab5c8" stroke-width="0.8"/><rect x="2.6" y="6.3" width="7.2" height="1" fill="#8ab5c8"/><rect x="2.6" y="8.2" width="4.6" height="0.8" fill="#8ab5c8" opacity="0.7"/><path d="M2.9 11.1 L3.7 10.5 V13.1 M5 10.9 Q5.7 10.3 6.4 10.8 Q6.7 11.3 5 13.1 H6.7 M7.7 10.6 H9.2 L8.4 11.6 Q9.4 11.8 9.2 12.6 Q8.7 13.3 7.7 12.9" fill="none" stroke="#8ab5c8" stroke-width="0.7"/></svg>
<svg style="left:324px;top:217px" width="17" height="16" viewBox="0 0 17 16"><rect x="3.5" y="0" width="9.5" height="3" fill="#8ab5c8"/><rect x="0" y="4.8" width="16" height="7.5" rx="1.5" fill="#8ab5c8"/><rect x="3.5" y="9.3" width="9.5" height="6.5" fill="#8ab5c8"/><rect x="5" y="10.3" width="6.5" height="4.3" fill="#fff"/><rect x="13" y="6.3" width="1.6" height="1.4" fill="#fff"/></svg><svg style="left:343px;top:217px" width="15" height="16" viewBox="0 0 15 16"><circle cx="7.1" cy="7.6" r="2.6" fill="none" stroke="#8ab5c8" stroke-width="1.4"/><path d="M9.7 5.2 V8.6 Q9.9 10.3 11.6 10.2 Q13.7 9.8 13.7 7.2 A6.5 6.5 0 1 0 10.3 13.6" fill="none" stroke="#8ab5c8" stroke-width="1.3"/></svg><svg style="left:362.5px;top:217px" width="13" height="17" viewBox="0 0 13 17"><path d="M1 0.8 H7.9 L11.6 4.5 V14.6 H1 Z" fill="#fff" stroke="#8ab5c8" stroke-width="1"/><path d="M7.9 0.8 V3.6 Q7.9 4.5 8.8 4.5 H11.6" fill="none" stroke="#8ab5c8" stroke-width="0.8"/><rect x="2.6" y="6.3" width="7.2" height="1" fill="#8ab5c8"/><rect x="2.6" y="8.2" width="4.6" height="0.8" fill="#8ab5c8" opacity="0.7"/><path d="M2.9 11.1 L3.7 10.5 V13.1 M5 10.9 Q5.7 10.3 6.4 10.8 Q6.7 11.3 5 13.1 H6.7 M7.7 10.6 H9.2 L8.4 11.6 Q9.4 11.8 9.2 12.6 Q8.7 13.3 7.7 12.9" fill="none" stroke="#8ab5c8" stroke-width="0.7"/></svg>
<svg style="left:683px;top:108px" width="15" height="16" viewBox="0 0 15 16"><path d="M5 2 V0.6 H10.5 L14 4 V13 H10" fill="#fff" stroke="#3a7fa0" stroke-width="0.9"/><path d="M0.6 2.3 H6.8 L10.2 5.7 V15.2 H0.6 Z" fill="#fff" stroke="#3a7fa0" stroke-width="1"/><path d="M6.8 2.3 V5.7 H10.2" fill="none" stroke="#3a7fa0" stroke-width="0.8"/><rect x="2.2" y="8" width="5" height="1" fill="#3a7fa0"/><rect x="2.2" y="10.5" width="5" height="1" fill="#3a7fa0"/></svg>
<svg style="left:684.5px;top:125.8px" width="11" height="16" viewBox="0 0 11 16"><path d="M2.6 7 V4.2 A3.2 3.2 0 0 1 9 4.2 V5.2" fill="none" stroke="#1db53a" stroke-width="1.9"/><rect x="0.3" y="6.6" width="10.5" height="8.9" fill="#1db53a"/><rect x="4.9" y="9.8" width="1.4" height="3.5" fill="#fff"/></svg>
<svg style="left:341px;top:261px" width="6" height="4" viewBox="0 0 6 4"><path d="M0 0 H5.6 L2.8 3 Z" fill="#222"/></svg>
<svg style="left:195px;top:284px" width="7" height="4" viewBox="0 0 7 4"><path d="M0 0 H6.6 L3.3 3.6 Z" fill="#222"/></svg>
<svg style="left:362.5px;top:252.5px" width="20" height="19" viewBox="0 0 20 19"><path d="M9.9 0.5 L12.7 3.3 V0.7 H16.3 V6.9 L19.4 9.9 L19 10.3 H16.5 V17.8 Q16.5 18.3 16 18.3 H12 V11.7 H7.5 V18.3 H3.5 Q3 18.3 3 17.8 V10.3 H0.8 L0.4 9.9 Z" fill="#17698b"/></svg>
<svg style="left:1215px;top:254px" width="17" height="16" viewBox="0 0 17 16"><rect x="0" y="2.5" width="1.8" height="12.5" rx="0.6" fill="#17698b"/><path d="M3 0 H12.5 L16 3.5 V14.5 Q16 15.6 14.9 15.6 H4.1 Q3 15.6 3 14.5 Z" fill="#17698b"/><circle cx="12.5" cy="3.5" r="0.9" fill="#fff"/><rect x="6" y="7.2" width="7" height="0.9" fill="#bcd3de"/><rect x="6" y="9.6" width="7" height="1.1" fill="#8fb6c9"/><rect x="6" y="12.2" width="5" height="0.9" fill="#bcd3de"/></svg>
<svg style="left:1214.5px;top:278.5px" width="17" height="23" viewBox="0 0 17 23"><path d="M3.7 9.5 V6.6 A4.8 4.8 0 0 1 13.3 6.6 V9.5" fill="none" stroke="#fa5a48" stroke-width="3"/><rect x="0.3" y="9.2" width="16.4" height="13.3" fill="#fa5a48"/><circle cx="8.5" cy="14.5" r="1" fill="#fff"/><rect x="7.8" y="14.5" width="1.4" height="4.6" fill="#fff"/></svg>
<svg style="left:76px;top:310.5px" width="13" height="13" viewBox="0 0 13 13"><rect x="4.3" y="0" width="3.8" height="12.3" fill="#3ab03a"/><rect x="0" y="4.3" width="12.3" height="3.8" fill="#3ab03a"/><rect x="4.8" y="0.5" width="2.8" height="11.3" fill="#48c040" opacity="0.6"/></svg>
<svg style="left:98px;top:310px" width="14" height="14" viewBox="0 0 14 14"><path d="M0 13.2 L1.2 9.3 L9.2 1.3 L11.9 4 L3.9 12 Z" fill="#cdcdcd"/><path d="M10 0.5 L11 -0.5 L13.7 2.2 L12.7 3.2 Z" fill="#cdcdcd"/></svg>
<svg style="left:120px;top:309px" width="15" height="16" viewBox="0 0 15 16"><path d="M5 2 V0.6 H10.5 L14 4 V13 H10" fill="#fff" stroke="#2f7a99" stroke-width="0.9"/><path d="M0.6 2.3 H6.8 L10.2 5.7 V15.2 H0.6 Z" fill="#fff" stroke="#2f7a99" stroke-width="1"/><path d="M6.8 2.3 V5.7 H10.2" fill="none" stroke="#2f7a99" stroke-width="0.8"/><rect x="2.2" y="8" width="5" height="1" fill="#2f7a99"/><rect x="2.2" y="10.5" width="5" height="1" fill="#2f7a99"/></svg>
<svg style="left:145px;top:309px" width="10" height="15" viewBox="0 0 10 15"><rect x="3.2" y="0" width="3" height="1.5" fill="#17698b"/><rect x="0" y="1.3" width="9.3" height="1.8" rx="0.6" fill="#17698b"/><path d="M0.3 3.8 H9 V13 Q9 14.3 7.7 14.3 H1.6 Q0.3 14.3 0.3 13 Z" fill="#17698b"/><rect x="2.3" y="5.5" width="0.9" height="6.8" rx="0.45" fill="#fff"/><rect x="4.2" y="5.5" width="0.9" height="6.8" rx="0.45" fill="#fff"/><rect x="6.1" y="5.5" width="0.9" height="6.8" rx="0.45" fill="#fff"/></svg>
<svg style="left:169px;top:311px" width="18" height="13" viewBox="0 0 18 13"><path d="M6.7 0 H11.3 V4 H14 L9 8.8 L4 4 H6.7 Z" fill="#8ab5c8"/><path d="M1 6 V11.5 H17 V6" fill="none" stroke="#8ab5c8" stroke-width="2"/></svg>
<svg style="left:192px;top:311px" width="18" height="13" viewBox="0 0 18 13"><path d="M9 0 L14 4.8 H11.3 V8.8 H6.7 V4.8 H4 Z" fill="#8ab5c8"/><path d="M1 6 V11.5 H17 V6" fill="none" stroke="#8ab5c8" stroke-width="2"/></svg>
<svg style="left:284.5px;top:308px" width="18" height="17" viewBox="0 0 18 17"><path d="M17.3 3.1 A7.2 7.2 0 1 0 17.3 13.9" fill="none" stroke="#a3c4d3" stroke-width="1.8"/><rect x="0" y="6.2" width="9.5" height="1.3" fill="#a3c4d3"/><rect x="0" y="9" width="9.5" height="1.3" fill="#a3c4d3"/></svg>
<svg style="left:307px;top:306px" width="21" height="21" viewBox="0 0 21 21"><path d="M10 0 L19.6 4.1 L10 7.7 L0.4 4.1 Z" fill="#a3c4d3"/><path d="M0 6 L9.2 9.4 V19.9 L0 16.3 Z" fill="#a3c4d3"/><path d="M20 6 L10.8 9.4 V19.9 L20 16.3 Z" fill="#a3c4d3"/></svg>
<svg style="left:332px;top:306px" width="21" height="20" viewBox="0 0 21 20"><rect x="0" y="2.8" width="1.5" height="14.5" fill="#a3c4d3"/><path d="M3.5 0 H12.5 L17 4.5 V11 A5 5 0 0 0 12.5 18 H5 Q3.5 18 3.5 16.5 Z" fill="#a3c4d3"/><circle cx="13" cy="3.6" r="0.9" fill="#fff"/><rect x="6" y="7" width="7.5" height="1" fill="#fff"/><rect x="6" y="9.8" width="7.5" height="1" fill="#fff"/><rect x="6" y="12.5" width="5" height="1" fill="#fff"/><path d="M15.8 12 L17 14.3 L19.5 14.6 L17.7 16.3 L18.2 18.8 L15.8 17.5 L13.5 18.8 L14 16.3 L12.2 14.6 L14.7 14.3 Z" fill="#a3c4d3"/></svg>
<svg style="left:357.5px;top:308px" width="28" height="18" viewBox="0 0 28 18"><path d="M0 0.5 H23 V10 A5.5 5.5 0 0 0 19 15.8 H0 Z" fill="#a3c4d3"/><path d="M0.5 1 L11.5 9.5 L22.5 1 M0.5 15.5 L8.5 8.5 M22.5 13 L15 8" stroke="#fff" stroke-width="1.2" fill="none"/><path d="M23.5 10.5 L24.8 13 L27.5 13.3 L25.5 15.1 L26 17.8 L23.5 16.4 L21 17.8 L21.5 15.1 L19.5 13.3 L22.2 13 Z" fill="#a3c4d3"/></svg>
<svg style="left:818px;top:333.5px" width="14" height="14" viewBox="0 0 14 14"><circle cx="5.5" cy="5.5" r="4.3" fill="none" stroke="#777" stroke-width="1.6"/><path d="M8.6 8.6 L12.8 12.8" stroke="#777" stroke-width="1.8"/></svg>
<svg style="left:1178px;top:334.5px" width="12" height="14" viewBox="0 0 12 14"><path d="M0 0.3 H11.5 L7.3 6.2 V11.5 L4.3 13.2 V6.2 Z" fill="#17698b"/></svg>
<svg style="left:1202px;top:334.5px" width="13" height="13" viewBox="0 0 13 13"><path d="M1 1 L11.5 11.8 M11.5 1 L1 11.8" stroke="#f40000" stroke-width="2.4"/></svg>
<svg style="left:1226px;top:335.5px" width="16" height="14" viewBox="0 0 16 14"><rect x="0.8" y="0.2" width="13.2" height="2.9" rx="0.8" fill="#17698b"/><rect x="0.8" y="2.5" width="1.7" height="8.7" fill="#17698b"/><rect x="0.8" y="6.4" width="4.7" height="1.2" fill="#17698b"/><rect x="0.8" y="10" width="4.7" height="1.2" fill="#17698b"/><rect x="12.5" y="2.5" width="1.5" height="3" fill="#17698b"/><circle cx="9.5" cy="8.2" r="2.6" fill="#fff" stroke="#17698b" stroke-width="1.4"/><path d="M11.3 10 L13.9 12.4" stroke="#17698b" stroke-width="1.6"/></svg>
<svg style="left:1256.5px;top:335.5px" width="4" height="12" viewBox="0 0 4 12"><circle cx="1.7" cy="1.4" r="1" fill="#333"/><circle cx="1.7" cy="5.8" r="1" fill="#333"/><circle cx="1.7" cy="10.2" r="1" fill="#333"/></svg>
<!-- ARROWS -->
<svg style="left:0;top:0" width="1276" height="621" viewBox="0 0 1276 621"><polygon points="473.9,385.9 473.7,384.2 493.5,379.9 489.4,375.8 503.2,381.8 491.1,390.5 494.5,386.0" fill="#ff2a00" stroke="#fff" stroke-width="3" stroke-linejoin="round" paint-order="stroke"/></svg>
<svg style="left:0;top:0" width="1276" height="621" viewBox="0 0 1276 621"><polygon points="770.3,410.7 770.1,409.0 793.3,404.5 788.5,399.4 804.2,406.9 789.7,416.8 793.8,411.0" fill="#ff2a00" stroke="#fff" stroke-width="3" stroke-linejoin="round" paint-order="stroke"/></svg>
<svg style="left:0;top:0" width="1276" height="621" viewBox="0 0 1276 621"><polygon points="648.9,423.7 648.7,422.0 669.5,421.6 666.1,416.5 678.2,425.0 664.6,431.5 668.5,426.9" fill="#ff2a00" stroke="#fff" stroke-width="3" stroke-linejoin="round" paint-order="stroke"/></svg>
<svg style="left:0;top:0" width="1276" height="621" viewBox="0 0 1276 621"><polygon points="783.2,447.8 783.0,446.1 804.8,445.7 800.4,440.4 812.8,449.1 799.5,455.4 803.8,451.3" fill="#ff2a00" stroke="#fff" stroke-width="3" stroke-linejoin="round" paint-order="stroke"/></svg>
</body></html>
